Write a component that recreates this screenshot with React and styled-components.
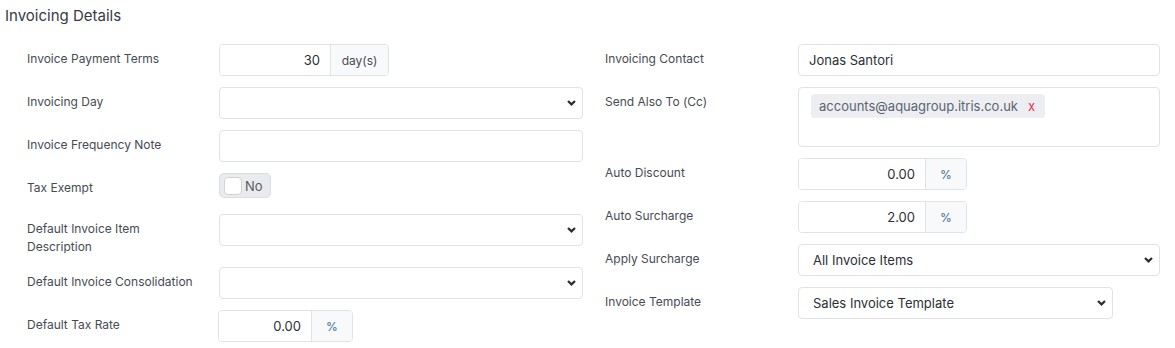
import React from "react";
import styled, { createGlobalStyle } from "styled-components";

const GlobalStyle = createGlobalStyle`
  body {
    margin: 0;
    background: #ffffff;
    font-family: Inter, "Noto Sans", "Liberation Sans", sans-serif;
    color: #212529;
  }
`;

const Page = styled.div`
  width: 1175px;
  height: 348px;
  overflow: hidden;
`;

const Title = styled.h2`
  margin: 0 0 18px;
  padding: 6px 0 0 5px;
  font-size: 15px;
  line-height: 20px;
  font-weight: 400;
  color: #363b41;
`;

const Columns = styled.div`
  display: grid;
  grid-template-columns: 556px 555px;
  column-gap: 22px;
  padding-left: 27px;
`;

const Column = styled.div`
  display: flex;
  flex-direction: column;
`;

const Row = styled.div`
  display: flex;
  align-items: flex-start;
  margin-bottom: 11px;
`;

const Label = styled.label`
  flex: 0 0 ${({ $w }) => $w}px;
  padding: 6px 12px 0 0;
  box-sizing: border-box;
  font-size: 12px;
  line-height: 18px;
  font-weight: 400;
  color: #464b52;
`;

const Control = styled.div`
  flex: 1;
  min-width: 0;
`;

const TextInput = styled.input`
  display: block;
  width: ${({ $w }) => ($w ? `${$w}px` : "100%")};
  height: 32px;
  box-sizing: border-box;
  padding: 0 10px;
  border: 1px solid #dfe2e6;
  border-radius: 4px;
  font-family: inherit;
  font-size: 13px;
  color: #2c3035;
  background: #fff;
  outline: none;
`;

const Group = styled.div`
  display: flex;
  width: ${({ $w }) => $w}px;
  height: 32px;
  box-sizing: border-box;
  border: 1px solid #dfe2e6;
  border-radius: 4px;
  overflow: hidden;
  margin-left: ${({ $shift }) => $shift || 0}px;
`;

const GroupInput = styled.input`
  flex: 1;
  min-width: 0;
  border: 0;
  padding: 0 10px;
  text-align: right;
  font-family: inherit;
  font-size: 13px;
  color: #2c3035;
  outline: none;
  background: #fff;
`;

const Addon = styled.span`
  flex: 0 0 ${({ $w }) => $w}px;
  display: flex;
  align-items: center;
  justify-content: center;
  border-left: 1px solid #dfe2e6;
  background: #f8f9fa;
  font-size: 12px;
  color: ${({ $muted }) => ($muted ? "#464b52" : "#3f6b94")};
`;

const SelectWrap = styled.div`
  position: relative;
  width: ${({ $w }) => ($w ? `${$w}px` : "100%")};
`;

const Select = styled.select`
  display: block;
  width: 100%;
  height: 32px;
  box-sizing: border-box;
  padding: 0 28px 0 14px;
  border: 1px solid #dfe2e6;
  border-radius: 4px;
  appearance: none;
  background: #fff;
  font-family: inherit;
  font-size: 13px;
  color: #2c3035;
  outline: none;
`;

const Chevron = styled.svg`
  position: absolute;
  right: 7px;
  top: 13px;
  pointer-events: none;
`;

const Toggle = styled.div`
  display: flex;
  align-items: center;
  gap: 3px;
  width: 52px;
  height: 25px;
  box-sizing: border-box;
  margin-bottom: 5px;
  padding-left: 4px;
  border: 1px solid #dadde1;
  border-radius: 5px;
  background: #e9ebee;
  font-size: 13px;
  color: #555b62;
`;

const Knob = styled.span`
  width: 18px;
  height: 18px;
  box-sizing: border-box;
  border: 1px solid #cfd3d8;
  border-radius: 4px;
  background: #fff;
`;

const TagBox = styled.div`
  height: 60px;
  box-sizing: border-box;
  padding: 6px 12px;
  border: 1px solid #dfe2e6;
  border-radius: 4px;
  background: #fff;
`;

const Tag = styled.span`
  display: inline-flex;
  align-items: center;
  gap: 10px;
  height: 24px;
  padding: 0 10px 0 8px;
  border-radius: 4px;
  background: #eceef1;
  font-size: 13px;
  color: #5b6470;
`;

const Remove = styled.span`
  color: #e8354c;
  font-size: 13px;
`;

function Dropdown({ value, width }) {
  return (
    <SelectWrap $w={width}>
      <Select defaultValue={value || ""}>
        <option value={value || ""}>{value || ""}</option>
      </Select>
      <Chevron width="9" height="6" viewBox="0 0 9 6">
        <path d="M1 1l3.5 3.4L8 1" fill="none" stroke="#2b2f33" strokeWidth="2.2" />
      </Chevron>
    </SelectWrap>
  );
}

function Addonned({ value, unit, width, addonWidth, muted, shift }) {
  return (
    <Group $w={width} $shift={shift}>
      <GroupInput defaultValue={value} />
      <Addon $w={addonWidth} $muted={muted}>
        {unit}
      </Addon>
    </Group>
  );
}

export default function App() {
  return (
    <Page>
      <GlobalStyle />
      <Title>Invoicing Details</Title>
      <Columns>
        <Column>
          <Row>
            <Label $w={192}>Invoice Payment Terms</Label>
            <Control>
              <Addonned value="30" unit="day(s)" width={170} addonWidth={57} muted />
            </Control>
          </Row>
          <Row>
            <Label $w={192}>Invoicing Day</Label>
            <Control>
              <Dropdown />
            </Control>
          </Row>
          <Row>
            <Label $w={192}>Invoice Frequency Note</Label>
            <Control>
              <TextInput />
            </Control>
          </Row>
          <Row>
            <Label $w={192}>Tax Exempt</Label>
            <Control>
              <Toggle>
                <Knob />
                No
              </Toggle>
            </Control>
          </Row>
          <Row>
            <Label $w={192}>
              Default Invoice Item
              <br />
              Description
            </Label>
            <Control>
              <Dropdown />
            </Control>
          </Row>
          <Row>
            <Label $w={192}>Default Invoice Consolidation</Label>
            <Control>
              <Dropdown />
            </Control>
          </Row>
          <Row>
            <Label $w={192}>Default Tax Rate</Label>
            <Control>
              <Addonned value="0.00" unit="%" width={135} addonWidth={40} shift={-1} />
            </Control>
          </Row>
        </Column>

        <Column>
          <Row>
            <Label $w={193}>Invoicing Contact</Label>
            <Control>
              <TextInput defaultValue="Jonas Santori" />
            </Control>
          </Row>
          <Row>
            <Label $w={193}>Send Also To (Cc)</Label>
            <Control>
              <TagBox>
                <Tag>
                  accounts@aquagroup.itris.co.uk
                  <Remove>x</Remove>
                </Tag>
              </TagBox>
            </Control>
          </Row>
          <Row>
            <Label $w={193}>Auto Discount</Label>
            <Control>
              <Addonned value="0.00" unit="%" width={169} addonWidth={40} />
            </Control>
          </Row>
          <Row>
            <Label $w={193}>Auto Surcharge</Label>
            <Control>
              <Addonned value="2.00" unit="%" width={169} addonWidth={40} />
            </Control>
          </Row>
          <Row>
            <Label $w={193}>Apply Surcharge</Label>
            <Control>
              <Dropdown value="All Invoice Items" />
            </Control>
          </Row>
          <Row>
            <Label $w={193}>Invoice Template</Label>
            <Control>
              <Dropdown value="Sales Invoice Template" width={315} />
            </Control>
          </Row>
        </Column>
      </Columns>
    </Page>
  );
}
